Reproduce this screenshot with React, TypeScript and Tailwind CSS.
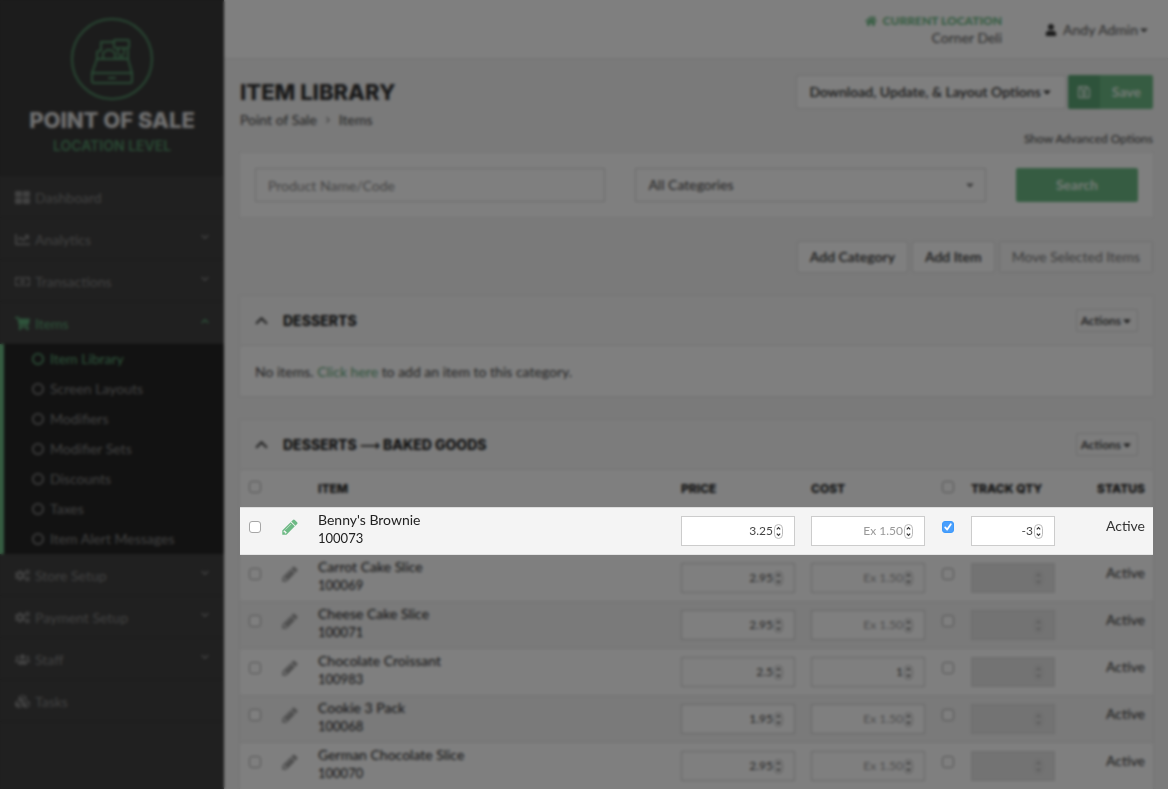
import type { ComponentType, ReactNode } from "react";
import {
  FaAngleRight,
  FaCaretDown,
  FaChartLine,
  FaCogs,
  FaCubes,
  FaHome,
  FaRegCircle,
  FaRegMoneyBillAlt,
  FaRegSave,
  FaShoppingCart,
  FaThLarge,
  FaUser,
  FaUsers,
} from "react-icons/fa";

interface NavEntry {
  label: string;
  icon: ComponentType<{ className?: string }>;
  expandable?: boolean;
  children?: string[];
}

interface Item {
  name: string;
  code: string;
  price: string;
  cost?: string;
  qty?: string;
  focused?: boolean;
}

const NAV: NavEntry[] = [
  { label: "Dashboard", icon: FaThLarge },
  { label: "Analytics", icon: FaChartLine, expandable: true },
  { label: "Transactions", icon: FaRegMoneyBillAlt, expandable: true },
  {
    label: "Items",
    icon: FaShoppingCart,
    expandable: true,
    children: [
      "Item Library",
      "Screen Layouts",
      "Modifiers",
      "Modifier Sets",
      "Discounts",
      "Taxes",
      "Item Alert Messages",
    ],
  },
  { label: "Store Setup", icon: FaCogs, expandable: true },
  { label: "Payment Setup", icon: FaCogs, expandable: true },
  { label: "Staff", icon: FaUsers, expandable: true },
  { label: "Tasks", icon: FaCubes },
];

const ITEMS: Item[] = [
  { name: "Benny's Brownie", code: "100073", price: "3.25", qty: "-3", focused: true },
  { name: "Carrot Cake Slice", code: "100069", price: "2.95" },
  { name: "Cheese Cake Slice", code: "100071", price: "2.95" },
  { name: "Chocolate Croissant", code: "100983", price: "2.5", cost: "1" },
  { name: "Cookie 3 Pack", code: "100068", price: "1.95" },
  { name: "German Chocolate Slice", code: "100070", price: "2.95" },
];

function RegisterLogo() {
  return (
    <svg
      className="w-[84px] h-[84px] text-[#549469]"
      viewBox="0 0 84 84"
      fill="none"
      stroke="currentColor"
      strokeWidth={2}
      strokeLinejoin="round"
      strokeLinecap="round"
      aria-hidden="true"
    >
      <circle cx="42" cy="42" r="40" />
      <path d="M27 42l-5 14v8a2 2 0 0 0 2 2h36a2 2 0 0 0 2-2v-8l-4-14z" />
      <path d="M22 56h40M39 61h6" />
      <path d="M27 42v-7l4-2v-8h12M58 42v-9" />
      <rect x="44" y="23" width="15" height="8" rx="1" />
      <path d="M48 31v4M54 31v4M33 41v-5l4-3h4l4 3v5M48 37l6 4M54 37l-6 4" />
    </svg>
  );
}

function PencilIcon({ className }: { className?: string }) {
  return (
    <svg className={className} viewBox="0 0 1792 1792" fill="currentColor" aria-hidden="true">
      <path d="M491 1536l91-91-235-235-91 91v107h128v128h107zm523-928q0-22-22-22-10 0-17 7l-542 542q-7 7-7 17 0 22 22 22 10 0 17-7l542-542q7-7 7-17zm-54-192l416 416-832 832h-416v-416zm683 96q0 53-37 90l-166 166-416-416 166-165q36-38 90-38 53 0 91 38l235 234q37 39 37 91z" />
    </svg>
  );
}

function Chevron({ className, up }: { className?: string; up?: boolean }) {
  return (
    <svg
      className={className}
      viewBox="0 0 12 8"
      fill="none"
      stroke="currentColor"
      strokeWidth={2}
      aria-hidden="true"
    >
      <path d={up ? "M1 7l5-5 5 5" : "M1 1l5 5 5-5"} />
    </svg>
  );
}

function Checkbox({ label, checked }: { label: string; checked?: boolean }) {
  return (
    <label className="inline-grid w-3 h-3 align-top">
      <input
        type="checkbox"
        aria-label={label}
        defaultChecked={checked}
        className="peer [grid-area:1/1] w-3 h-3 appearance-none rounded-[3px] border border-[#a6a6a6] bg-white checked:border-[#3b99fc] checked:bg-[#4a9ffc]"
      />
      <svg
        className="[grid-area:1/1] w-3 h-3 text-white pointer-events-none hidden peer-checked:block"
        viewBox="0 0 12 12"
        fill="none"
        stroke="currentColor"
        strokeWidth={1.8}
        strokeLinecap="round"
        strokeLinejoin="round"
        aria-hidden="true"
      >
        <path d="M3.2 6.4l2 2.2 3.6-5.4" />
      </svg>
    </label>
  );
}

interface NumberBoxProps {
  label: string;
  value?: string;
  placeholder?: string;
  disabled?: boolean;
}

function NumberBox({ label, value, placeholder, disabled }: NumberBoxProps) {
  return (
    <div
      className={`flex items-center h-[30px] pr-[11px] border ${
        disabled ? "bg-[#e6e6e6] border-[#d8d8d8]" : "bg-white border-[#ccc]"
      }`}
    >
      <input
        type="number"
        aria-label={label}
        defaultValue={value}
        placeholder={placeholder}
        disabled={disabled}
        className="flex-1 min-w-0 bg-transparent text-right text-xs leading-5 text-[#444] placeholder:text-[#999] outline-none [&::-webkit-inner-spin-button]:appearance-none"
      />
      <svg
        className={`w-[9px] h-[15px] ml-px shrink-0 ${disabled ? "opacity-40" : ""}`}
        viewBox="0 0 9 15"
        fill="none"
        aria-hidden="true"
      >
        <rect x="0.5" y="0.5" width="8" height="14" rx="4" stroke="#bbb" />
        <path d="M2.8 5.4L4.5 3.6l1.7 1.8M2.8 9.6l1.7 1.8 1.7-1.8" stroke="#333" strokeWidth="1.2" />
      </svg>
    </div>
  );
}

function Sidebar() {
  return (
    <aside className="w-56 shrink-0 bg-[#404040] text-[#848484]">
      <div className="flex flex-col items-center h-44 pt-[17px] bg-[#383838]">
        <RegisterLogo />
        <div className="mt-1 font-[Inter,sans-serif] text-[22px] leading-[30px] font-extrabold text-[#e0e0e0]">
          POINT OF SALE
        </div>
        <div className="font-[Inter,sans-serif] text-sm leading-[22px] font-semibold text-[#549469]">
          LOCATION LEVEL
        </div>
      </div>
      <nav>
        {NAV.map(({ label, icon: Icon, expandable, children }) => (
          <div key={label}>
            <a
              href="#"
              className={`flex items-center h-[42px] px-[15px] pt-[2px] border-b border-[#383838] ${
                children ? "text-[#5da676]" : ""
              }`}
            >
              <Icon className="w-[15px] h-[15px] mr-[5px]" />
              <span className="flex-1">{label}</span>
              {expandable && <Chevron up={!!children} className="w-2 h-2 mb-[6px]" />}
            </a>
            {children && (
              <ul className="bg-[#242424] border-l-4 border-[#6cb984]">
                {children.map((child, i) => (
                  <li key={child}>
                    <a
                      href="#"
                      className={`flex items-center h-[30px] pl-7 gap-[6px] ${i === 0 ? "text-[#5da676]" : ""}`}
                    >
                      <FaRegCircle className="w-3 h-3" stroke="currentColor" strokeWidth={24} />
                      {child}
                    </a>
                  </li>
                ))}
              </ul>
            )}
          </div>
        ))}
      </nav>
    </aside>
  );
}

function TopBar() {
  return (
    <header className="flex items-center justify-end h-[59px] pt-[2px] pr-[18px] bg-white border-b border-[#e7e7e7] text-[#555]">
      <div className="mr-[43px] text-right">
        <div className="flex items-center justify-end gap-[6px] text-xs leading-4 font-black text-[#6cb984]">
          <FaHome className="w-3 h-3" />
          CURRENT LOCATION
        </div>
        <div className="leading-[18px]">Corner Deli</div>
      </div>
      <button type="button" className="flex items-center">
        <FaUser className="w-3 h-3 mr-[6px] text-[#333]" />
        Andy Admin
        <FaCaretDown className="w-3 h-3" />
      </button>
    </header>
  );
}

function PanelHeader({ children }: { children: ReactNode }) {
  return (
    <div className="flex items-center h-[50px] px-[15px] bg-[#f9f9f9] border-b border-[#e4e4e4]">
      <Chevron up className="w-[13px] h-[9px] mr-[15px] text-[#444]" />
      <h2 className="flex-1 font-[Inter,sans-serif] text-sm font-extrabold text-[#222]">{children}</h2>
      <button
        type="button"
        className="flex items-center h-[23px] px-1 border border-[#d8d8d8] rounded-xs bg-[#fafafa] text-xs font-semibold text-[#333]"
      >
        Actions
        <FaCaretDown className="w-3 h-3" />
      </button>
    </div>
  );
}

function ItemTable() {
  return (
    <table className="w-full table-fixed border-separate border-spacing-0 text-left text-[#333]">
      <colgroup>
        <col className="w-[34px]" />
        <col className="w-9" />
        <col />
        <col className="w-[130px]" />
        <col className="w-[130px]" />
        <col className="w-[30px]" />
        <col className="w-[100px]" />
        <col className="w-[90px]" />
      </colgroup>
      <thead className="font-[Inter,sans-serif] text-xs text-[#222]">
        <tr className="h-[38px]">
          <th className="pl-[9px]">
            <Checkbox label="Select all items" />
          </th>
          <th />
          <th className="px-2 font-extrabold">ITEM</th>
          <th className="px-2 font-extrabold">PRICE</th>
          <th className="px-2 font-extrabold">COST</th>
          <th className="pl-[9px]">
            <Checkbox label="Track all quantities" />
          </th>
          <th className="px-2 font-extrabold">TRACK QTY</th>
          <th className="px-2 font-extrabold text-right">STATUS</th>
        </tr>
      </thead>
      <tbody>
        {ITEMS.map((item) => (
          <tr
            key={item.code}
            className={`align-top odd:bg-[#f4f4f4] even:bg-white [&>td]:border-b [&>td]:border-[#e4e4e4] ${
              item.focused ? "relative z-20 shadow-[0_-1px_0_#ddd]" : ""
            }`}
          >
            <td className="pl-[9px] pt-[13px] leading-3">
              <Checkbox label={`Select ${item.name}`} />
            </td>
            <td className="pl-[7px] pt-[10px]">
              <button type="button" aria-label={`Edit ${item.name}`} className="block">
                <PencilIcon className={`w-[18px] h-[18px] ${item.focused ? "text-[#6cb984]" : "text-[#999]"}`} />
              </button>
            </td>
            <td className="px-2 pt-[3px] leading-[18px] text-[#222]">
              <div>{item.name}</div>
              <div className="text-[13px] leading-[18px]">{item.code}</div>
            </td>
            <td className="p-2">
              <NumberBox label={`Price of ${item.name}`} value={item.price} />
            </td>
            <td className="p-2">
              <NumberBox label={`Cost of ${item.name}`} value={item.cost} placeholder="Ex 1.50" />
            </td>
            <td className="pl-[9px] pt-[13px] leading-3">
              <Checkbox label={`Track ${item.name}`} checked={item.qty !== undefined} />
            </td>
            <td className="p-2">
              <NumberBox
                label={`Quantity of ${item.name}`}
                value={item.qty}
                disabled={item.qty === undefined}
              />
            </td>
            <td className="px-2 pt-2 text-right leading-5">Active</td>
          </tr>
        ))}
      </tbody>
    </table>
  );
}

export default function App() {
  const button = "h-8 px-3 border border-[#dcdcdc] rounded-xs";

  return (
    <div className="flex h-screen overflow-hidden bg-[#f4f4f4] font-[Lato,sans-serif] text-sm">
      <Sidebar />

      <div className="flex-1 min-w-0">
        <TopBar />

        <main className="pl-4 pr-[15px]">
          <div className="flex items-start justify-between pt-4">
            <div>
              <h1 className="font-[Inter,sans-serif] text-[22px] leading-[34px] font-extrabold text-[#333]">
                ITEM LIBRARY
              </h1>
              <div className="flex items-center gap-[6px] leading-[22px] text-[#444]">
                <a href="#">Point of Sale</a>
                <FaAngleRight className="w-[10px] h-[10px] text-[#999]" />
                <a href="#">Items</a>
              </div>
            </div>
            <div className="flex gap-[2px]">
              <button
                type="button"
                className="flex items-center h-[34px] px-3 bg-white border border-[#dcdcdc] rounded-xs font-semibold text-[#333]"
              >
                Download, Update, &amp; Layout Options
                <FaCaretDown className="w-3 h-3" />
              </button>
              <button
                type="button"
                className="flex items-center h-[34px] rounded-xs overflow-hidden bg-[#6cb984] font-bold text-[#e8f5ec]"
              >
                <span className="flex items-center justify-center w-8 h-full bg-[#5da676]">
                  <FaRegSave className="w-[14px] h-[14px]" />
                </span>
                <span className="px-3">Save</span>
              </button>
            </div>
          </div>

          <div className="text-right text-xs leading-4 text-[#444]">
            <a href="#">Show Advanced Options</a>
          </div>

          <form className="grid grid-cols-12 mt-[6px] py-[15px] bg-white ring-1 ring-[#ececec]">
            <div className="col-span-5 px-[15px]">
              <input
                type="text"
                aria-label="Product Name/Code"
                placeholder="Product Name/Code"
                className="w-full h-[34px] px-3 border border-[#d4d4d4] bg-white placeholder:text-[#888]"
              />
            </div>
            <div className="col-span-5 px-[15px] grid items-center">
              <select
                aria-label="Category"
                className="[grid-area:1/1] w-full h-[34px] px-3 border border-[#d4d4d4] bg-white appearance-none text-[#444]"
              >
                <option>All Categories</option>
              </select>
              <FaCaretDown className="[grid-area:1/1] justify-self-end w-3 h-3 mr-[10px] text-[#777] pointer-events-none" />
            </div>
            <div className="col-span-2 px-[15px]">
              <button type="submit" className="w-full h-[34px] rounded-xs bg-[#6cb984] font-bold text-[#e8f5ec]">
                Search
              </button>
            </div>
          </form>

          <div className="flex justify-end gap-1 mt-6 mb-[23px]">
            <button type="button" className={`${button} bg-white font-semibold text-[#333]`}>
              Add Category
            </button>
            <button type="button" className={`${button} bg-white font-semibold text-[#333]`}>
              Add Item
            </button>
            <button type="button" className={`${button} bg-[#f8f8f8] text-[#777]`}>
              Move Selected Items
            </button>
          </div>

          <section className="mb-6 ring-1 ring-[#e8e8e8] bg-white">
            <PanelHeader>DESSERTS</PanelHeader>
            <p className="px-[15px] pt-4 pb-[14px] leading-5 text-[#444]">
              No items.{" "}
              <a href="#" className="text-[#5da676]">
                Click here
              </a>{" "}
              to add an item to this category.
            </p>
          </section>

          <section className="ring-1 ring-[#e8e8e8] bg-white">
            <PanelHeader>
              DESSERTS <span className="font-['DejaVu_Sans',sans-serif] text-sm">⟶</span> BAKED GOODS
            </PanelHeader>
            <ItemTable />
          </section>
        </main>
      </div>

      {/* Spotlight backdrop, the focused row is stacked above it */}
      <div className="fixed inset-0 z-10 bg-black/50 backdrop-blur-[0.1rem] pointer-events-none" />
    </div>
  );
}
